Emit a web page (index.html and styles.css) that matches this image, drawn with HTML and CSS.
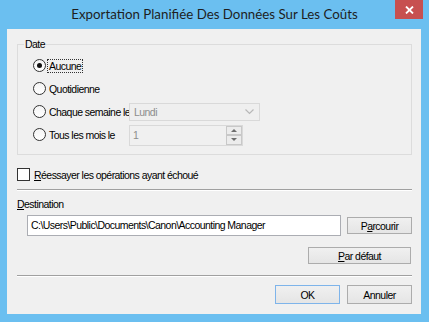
FILE: index.html
```html
<!DOCTYPE html>
<html lang="fr">

<head>
    <meta charset="UTF-8">
    <meta name="viewport" content="width=device-width, initial-scale=1.0">
    <title>Exportation Planifiée Des Données Sur Les Coûts</title>
    <link rel="stylesheet" href="styles.css">
</head>

<body>
    <div class="window">
        <div class="titlebar">
            <span class="title">Exportation Planifiée Des Données Sur Les Coûts</span>
            <div class="close">
                <svg width="9" height="8" viewBox="0 0 9 8">
                    <path d="M1 0.5 L8 7.5 M8 0.5 L1 7.5" stroke="#fff" stroke-width="1.8" />
                </svg>
            </div>
        </div>

        <div class="client">
            <!-- Planification -->
            <div class="group">
                <span class="group-title">Date</span>
                <div class="option">
                    <span class="radio checked"></span>
                    <span class="label focus">Aucune</span>
                </div>
                <div class="option">
                    <span class="radio"></span>
                    <span class="label">Quotidienne</span>
                </div>
                <div class="option">
                    <span class="radio"></span>
                    <span class="label fixed">Chaque semaine le</span>
                    <div class="combo">
                        <span>Lundi</span>
                        <svg width="9" height="6" viewBox="0 0 9 6">
                            <path d="M0.5 0.5 L4.5 4.5 L8.5 0.5" fill="none" stroke="#b8b8b8" stroke-width="1.2" />
                        </svg>
                    </div>
                </div>
                <div class="option">
                    <span class="radio"></span>
                    <span class="label fixed">Tous les mois le</span>
                    <div class="spinner">
                        <span class="spin-value">1</span>
                        <div class="spin-buttons">
                            <div class="spin-btn"><span class="arrow-up"></span></div>
                            <div class="spin-btn"><span class="arrow-down"></span></div>
                        </div>
                    </div>
                </div>
            </div>

            <div class="check-row">
                <span class="checkbox"></span>
                <span class="label"><u>R</u>éessayer les opérations ayant échoué</span>
            </div>

            <div class="separator"></div>

            <div class="field-label"><u>D</u>estination</div>
            <div class="path-row">
                <div class="textbox">C:\Users\Public\Documents\Canon\Accounting Manager</div>
                <button class="btn">P<u>a</u>rcourir</button>
            </div>

            <div class="right-row">
                <button class="btn wide"><u>P</u>ar défaut</button>
            </div>

            <div class="separator bottom"></div>

            <div class="right-row actions">
                <button class="btn default">OK</button>
                <button class="btn">Annuler</button>
            </div>
        </div>
    </div>
</body>

</html>
```

FILE: styles.css
```css
body {
    margin: 0;
    padding: 0;
    font-family: "Liberation Sans", Arial, sans-serif;
    font-size: 10.5px;
    letter-spacing: -0.55px;
    color: #000;
}

.window {
    width: 429px;
    height: 322px;
    background-color: #6bbff0;
    display: flex;
    flex-direction: column;
}

/* Barre de titre */
.titlebar {
    height: 29px;
    display: flex;
    align-items: flex-start;
    padding-left: 34px;
}

.title {
    flex: 1;
    text-align: center;
    font-family: Lato, "Noto Sans", sans-serif;
    font-size: 13.3px;
    letter-spacing: 0;
    line-height: 29px;
    color: #1e1e1e;
}

.close {
    width: 28px;
    height: 19px;
    margin-right: 6px;
    background-color: #c75050;
    display: flex;
    align-items: center;
    justify-content: center;
}

/* Zone cliente */
.client {
    margin: 0 8px 8px 7px;
    height: 285px;
    box-sizing: border-box;
    background-color: #f0f0f0;
    padding: 15px 9px 10px 10px;
}

.group {
    height: 111px;
    box-sizing: border-box;
    border: 1px solid #dcdcdc;
    padding: 0 0 8px 15px;
}

.group-title {
    display: block;
    width: fit-content;
    margin: -7px 0 0 -9px;
    padding: 0 1px;
    line-height: 13px;
    background-color: #f0f0f0;
}

.option {
    height: 23px;
    display: flex;
    align-items: center;
}

.group-title + .option {
    margin-top: 3px;
}

.radio {
    width: 11px;
    height: 11px;
    border: 1px solid #333;
    border-radius: 50%;
    background: linear-gradient(#f4f4f4, #ffffff);
    display: flex;
    align-items: center;
    justify-content: center;
    flex-shrink: 0;
}

.radio.checked::after {
    content: "";
    width: 5px;
    height: 5px;
    border-radius: 50%;
    background-color: #111;
}

.label {
    margin-left: 1px;
    padding: 0 1px;
    line-height: 12px;
    border: 1px dotted transparent;
}

.label.focus {
    border-color: #333;
}

.label.fixed {
    width: 78px;
    white-space: nowrap;
}

.combo {
    width: 131px;
    height: 18px;
    box-sizing: border-box;
    border: 1px solid #d9d9d9;
    background-color: #efefef;
    color: #8d8d8d;
    display: flex;
    align-items: center;
    justify-content: space-between;
    padding: 0 5px 0 4px;
    margin-top: 1px;
}

.spinner {
    width: 114px;
    height: 21px;
    box-sizing: border-box;
    border: 1px solid #d9d9d9;
    background-color: #f0f0f0;
    display: flex;
    margin-top: 1px;
}

.spin-value {
    flex: 1;
    padding: 3px 0 0 3px;
    color: #8d8d8d;
}

.spin-buttons {
    width: 16px;
    display: flex;
    flex-direction: column;
}

.spin-btn {
    flex: 1;
    border: 1px solid #c8c8c8;
    background-color: #ececec;
    display: flex;
    align-items: center;
    justify-content: center;
}

.arrow-up {
    border-left: 3px solid transparent;
    border-right: 3px solid transparent;
    border-bottom: 3px solid #6d6d6d;
}

.arrow-down {
    border-left: 3px solid transparent;
    border-right: 3px solid transparent;
    border-top: 3px solid #6d6d6d;
}

/* Case à cocher */
.check-row {
    margin-top: 13px;
    height: 13px;
    display: flex;
    align-items: center;
}

.checkbox {
    width: 11px;
    height: 11px;
    border: 1px solid #333;
    background-color: #fff;
    margin-right: 2px;
}

.check-row .label {
    border: none;
}

.separator {
    margin-top: 8px;
    height: 0;
    border-top: 1px solid #a0a0a0;
    border-bottom: 1px solid #fff;
}

.separator.bottom {
    margin-top: 11px;
}

.field-label {
    margin-top: 6px;
    line-height: 14px;
}

.path-row {
    margin-top: 4px;
    padding-left: 10px;
    display: flex;
    align-items: center;
    gap: 6px;
    height: 21px;
}

.textbox {
    flex: 1;
    height: 21px;
    box-sizing: border-box;
    border: 1px solid #abadb3;
    background-color: #fff;
    padding: 3px 0 0 3px;
    white-space: nowrap;
}

.btn {
    width: 65px;
    height: 17px;
    box-sizing: border-box;
    margin: 0;
    padding: 0;
    border: 1px solid #acacac;
    background: linear-gradient(#f0f0f0, #e5e5e5);
    font-family: "Liberation Sans", Arial, sans-serif;
    font-size: 10.5px;
    letter-spacing: -0.55px;
    color: #000;
}

.btn.wide {
    width: 103px;
}

.btn.default {
    border-color: #7eb4ea;
}

.right-row {
    margin-top: 11px;
    display: flex;
    justify-content: flex-end;
    gap: 7px;
    padding-right: 1px;
}

.actions {
    margin-top: 8px;
    padding-right: 0;
}

.actions .btn {
    height: 19px;
}
```
